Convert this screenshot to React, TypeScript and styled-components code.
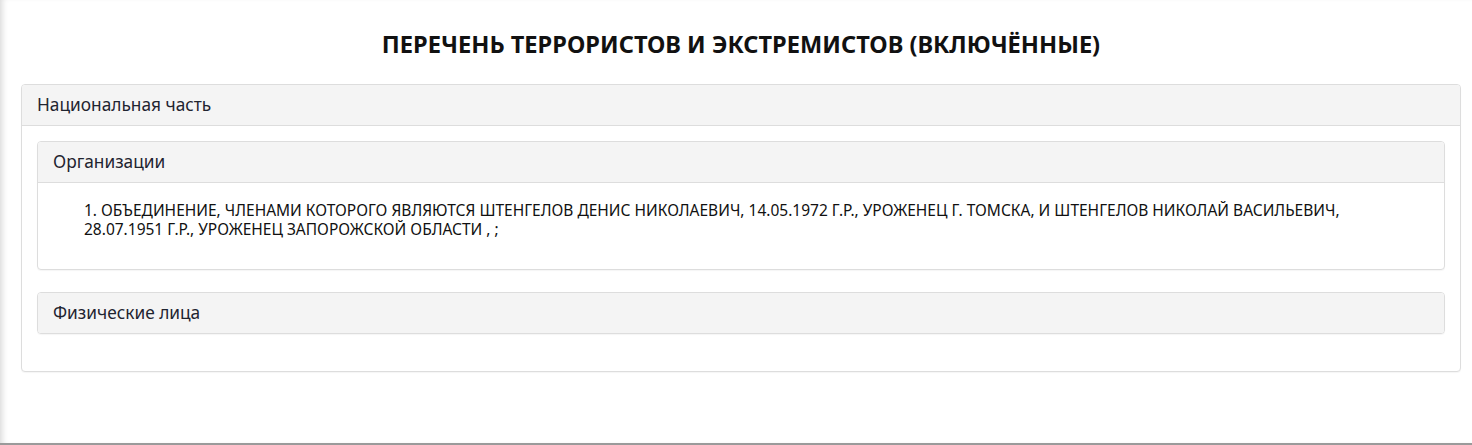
import React from "react";
import styled, { createGlobalStyle } from "styled-components";

const Global = createGlobalStyle`
  html, body { margin: 0; padding: 0; background: #fff; }
  body { font-family: "Noto Sans", "Open Sans", sans-serif; color: #222; }
`;

const Page = styled.div`
  box-sizing: border-box;
  height: 445px;
  padding: 0 11px 0 21px;
  border-bottom: 2px solid #9a9a9a;
  box-shadow: inset 6px 0 6px -4px #d8d8d8;
`;

const Title = styled.h1`
  margin: 0;
  padding: 29px 0 25px;
  text-align: center;
  font-size: 23.6px;
  line-height: 30px;
  font-weight: 700;
  color: #111;
`;

const Panel = styled.div<{ $nested?: boolean }>`
  border: 1px solid #ddd;
  border-radius: 4px;
  background: #fff;
  margin-bottom: ${(p) => (p.$nested ? "22px" : "0")};
  box-shadow: 0 1px 1px rgba(0, 0, 0, 0.04);
  overflow: hidden;
`;

const PanelHeading = styled.div<{ $bordered?: boolean }>`
  background: #f4f4f4;
  padding: 10px 15px;
  font-size: 17.3px;
  line-height: 20px;
  color: #1f2430;
  border-bottom: ${(p) => (p.$bordered ? "1px solid #ddd" : "none")};
`;

const PanelBody = styled.div`
  padding: 15px 15px 15px;
`;

const Entry = styled.p`
  margin: 0;
  padding: 18px 60px 30px 46px;
  font-size: 15.5px;
  line-height: 19px;
  color: #111;
`;

export default function App() {
  return (
    <>
      <Global />
      <Page>
        <Title>ПЕРЕЧЕНЬ ТЕРРОРИСТОВ И ЭКСТРЕМИСТОВ (ВКЛЮЧЁННЫЕ)</Title>
        <Panel>
          <PanelHeading $bordered>Национальная часть</PanelHeading>
          <PanelBody>
            <Panel $nested>
              <PanelHeading $bordered>Организации</PanelHeading>
              <Entry>
                1. ОБЪЕДИНЕНИЕ, ЧЛЕНАМИ КОТОРОГО ЯВЛЯЮТСЯ ШТЕНГЕЛОВ ДЕНИС НИКОЛАЕВИЧ, 14.05.1972 Г.Р., УРОЖЕНЕЦ Г. ТОМСКА, И ШТЕНГЕЛОВ НИКОЛАЙ ВАСИЛЬЕВИЧ, 28.07.1951 Г.Р., УРОЖЕНЕЦ ЗАПОРОЖСКОЙ ОБЛАСТИ , ;
              </Entry>
            </Panel>
            <Panel $nested>
              <PanelHeading>Физические лица</PanelHeading>
            </Panel>
          </PanelBody>
        </Panel>
      </Page>
    </>
  );
}
